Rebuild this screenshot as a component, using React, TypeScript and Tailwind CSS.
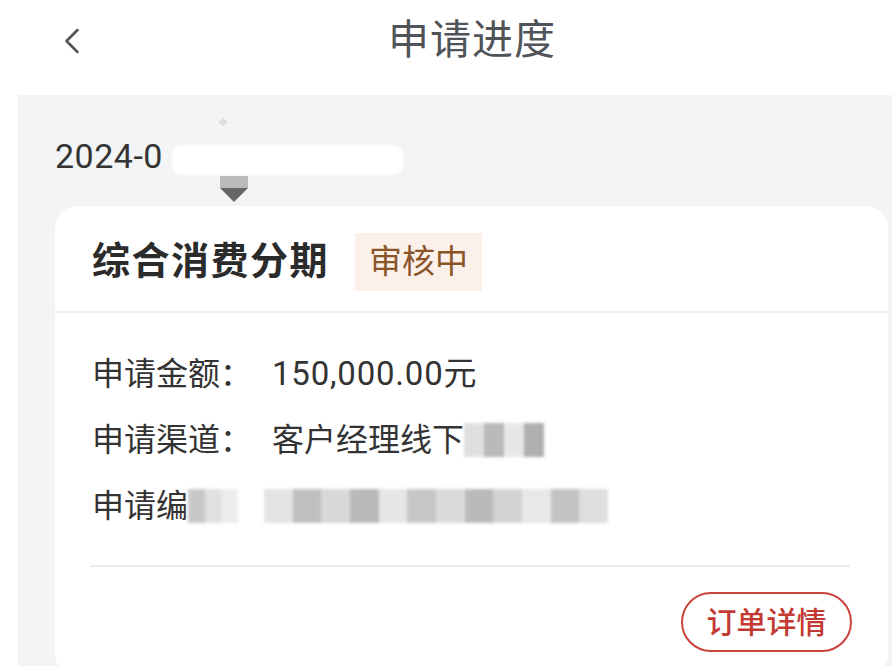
import { ChevronLeft } from 'lucide-react';

const CJK = "font-['Roboto','Noto_Sans_CJK_SC',sans-serif]";

// 申请进度 — one application card
export default function App() {
  return (
    <div className={`w-[892px] h-[666px] overflow-hidden bg-white ${CJK}`}>
      {/* ── 顶部导航 ── */}
      <header className="h-[95px] flex items-start pt-[17px]">
        <div className="w-[388px] pl-[50px] pt-[2px] flex items-center">
          <ChevronLeft className="w-[44px] h-[44px] text-[#555]" strokeWidth={1.4} />
        </div>
        <h1 className="text-[41px] leading-[46px] text-[#505458] tracking-[1px]">申请进度</h1>
      </header>

      {/* ── 灰色内容区 ── */}
      <main className="ml-[18px] h-[571px] bg-[#f3f4f6] pl-[37px] pr-[4px] pt-[44px]">
        <div className="relative h-[67px]">
          <span className="text-[34px] leading-none text-[#333] tracking-[0.5px]">2024-0</span>
          {/* 打码遮挡 */}
          <div className="absolute left-[117px] top-[6px] w-[231px] h-[30px] bg-white rounded-[10px] blur-[1px]" />
          <div className="absolute left-[165px] top-[-20px] w-[6px] h-[6px] bg-[#ddd] rotate-45" />
          <div className="absolute left-[165px] top-[37px] w-[28px] h-[12px] bg-[#bbb]" />
          <div className="absolute left-[165px] top-[49px] w-0 h-0 border-l-[14px] border-r-[14px] border-t-[14px] border-l-transparent border-r-transparent border-t-[#666]" />
        </div>

        <section className="bg-white rounded-[22px] h-[470px]">
          {/* 卡片头 */}
          <div className="h-[107px] flex items-center pl-[37px] gap-[26px] border-b-[2px] border-[#eeeeee] pt-[6px]">
            <span className="text-[38px] font-semibold text-[#2b2b2b] tracking-[1.5px]">综合消费分期</span>
            <span className="h-[58px] px-[14px] flex items-center bg-[#fcf1ea] text-[33px] text-[#8a5528]">审核中</span>
          </div>

          {/* 明细 */}
          <div className="pl-[37px] pt-[43px] flex flex-col gap-[30px] text-[32px] leading-[36px] text-[#333]">
            <Row label="申请金额：" value="150,000.00元" />
            <div className="flex items-center">
              <span className="w-[180px]">申请渠道：</span>
              <span>客户经理线下</span>
              <Mosaic w={80} shades={['#d8d8d8', '#a9a9a9', '#e2e2e2', '#9c9c9c']} />
            </div>
            <div className="flex items-center">
              <span>申请编</span>
              <Mosaic w={50} shades={['#bbb', '#d9d9d9', '#e8e8e8']} />
              <div className="ml-[26px]">
                <Mosaic w={344} shades={['#ddd', '#b0b0b0', '#cfcfcf', '#a8a8a8', '#e0e0e0', '#b9b9b9', '#d2d2d2', '#aaa', '#c8c8c8', '#e3e3e3', '#b5b5b5', '#d6d6d6']} />
              </div>
            </div>
          </div>

          <div className="ml-[35px] mr-[38px] mt-[41px] border-t-[2px] border-[#ececec]" />

          <div className="flex justify-end pr-[36px] pt-[25px]">
            <button className="w-[171px] h-[60px] rounded-full border-[2px] border-[#c9433b] text-[30px] text-[#c23a32] font-medium flex items-center justify-center">
              订单详情
            </button>
          </div>
        </section>
      </main>
    </div>
  );
}

function Row({ label, value }: { label: string; value: string }) {
  return (
    <div className="flex items-center">
      <span className="w-[180px]">{label}</span>
      <span className="text-[33px] tracking-[0.8px]">{value}</span>
    </div>
  );
}

/** 模糊打码块 */
function Mosaic({ w, shades }: { w: number; shades: string[] }) {
  return (
    <div className="flex h-[34px] blur-[1.5px] opacity-80" style={{ width: w }}>
      {shades.map((c, i) => (
        <div key={i} className="flex-1 h-full" style={{ backgroundColor: c }} />
      ))}
    </div>
  );
}
